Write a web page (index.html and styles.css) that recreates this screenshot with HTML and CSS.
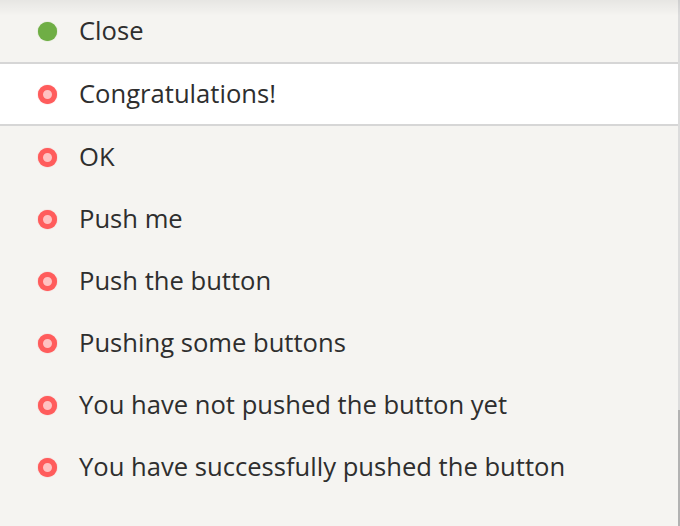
FILE: index.html
```html
<!DOCTYPE html>
<html>
<head>
<meta charset="utf-8">
<link rel="stylesheet" href="styles.css">
</head>
<body>
<div class="frame">
  <ul class="list">
    <li class="row"><span class="dot dot-on"></span><span class="label">Close</span></li>
    <li class="row row-selected"><span class="dot dot-off"></span><span class="label">Congratulations!</span></li>
    <li class="row"><span class="dot dot-off"></span><span class="label">OK</span></li>
    <li class="row"><span class="dot dot-off"></span><span class="label">Push me</span></li>
    <li class="row"><span class="dot dot-off"></span><span class="label">Push the button</span></li>
    <li class="row"><span class="dot dot-off"></span><span class="label">Pushing some buttons</span></li>
    <li class="row"><span class="dot dot-off"></span><span class="label">You have not pushed the button yet</span></li>
    <li class="row"><span class="dot dot-off"></span><span class="label">You have successfully pushed the button</span></li>
  </ul>
  <div class="scrollbar"><div class="thumb"></div></div>
</div>
</body>
</html>
```

FILE: styles.css
```css
html, body {
  margin: 0;
  padding: 0;
  height: 100%;
  background: #f5f4f1;
}
.frame {
  display: flex;
  height: 526px;
  overflow: hidden;
  position: relative;
  font-family: "Open Sans", "Noto Sans", sans-serif;
  color: #2e2e2e;
}
.frame::before {
  content: "";
  position: absolute;
  left: 0;
  right: 0;
  top: 0;
  height: 16px;
  background: linear-gradient(to bottom, rgba(0,0,0,0.06), rgba(0,0,0,0));
  pointer-events: none;
}
.list {
  flex: 1;
  list-style: none;
  margin: 0;
  padding: 0;
}
.row {
  display: flex;
  align-items: center;
  height: 62px;
  box-sizing: border-box;
  padding-left: 38px;
}
.row-selected {
  height: 64px;
  background: #ffffff;
  border-top: 2px solid #d6d6d6;
  border-bottom: 2px solid #d6d6d6;
}
.dot {
  width: 19px;
  height: 19px;
  border-radius: 50%;
  flex: none;
  margin-right: 22px;
  box-sizing: border-box;
}
.dot-on {
  background: #6fae45;
  box-shadow: 0 0 1px #6fae45;
}
.dot-off {
  background: #ffc2c2;
  border: 5px solid #ff5c5c;
  box-shadow: 0 0 1px #ff5c5c;
}
.label {
  font-size: 25.6px;
  line-height: 30px;
  white-space: nowrap;
}
.scrollbar {
  width: 2px;
  flex: none;
  background: #dcdcdc;
  display: flex;
  flex-direction: column;
  justify-content: flex-end;
}
.thumb {
  height: 116px;
  background: #b2b2b2;
}
```
